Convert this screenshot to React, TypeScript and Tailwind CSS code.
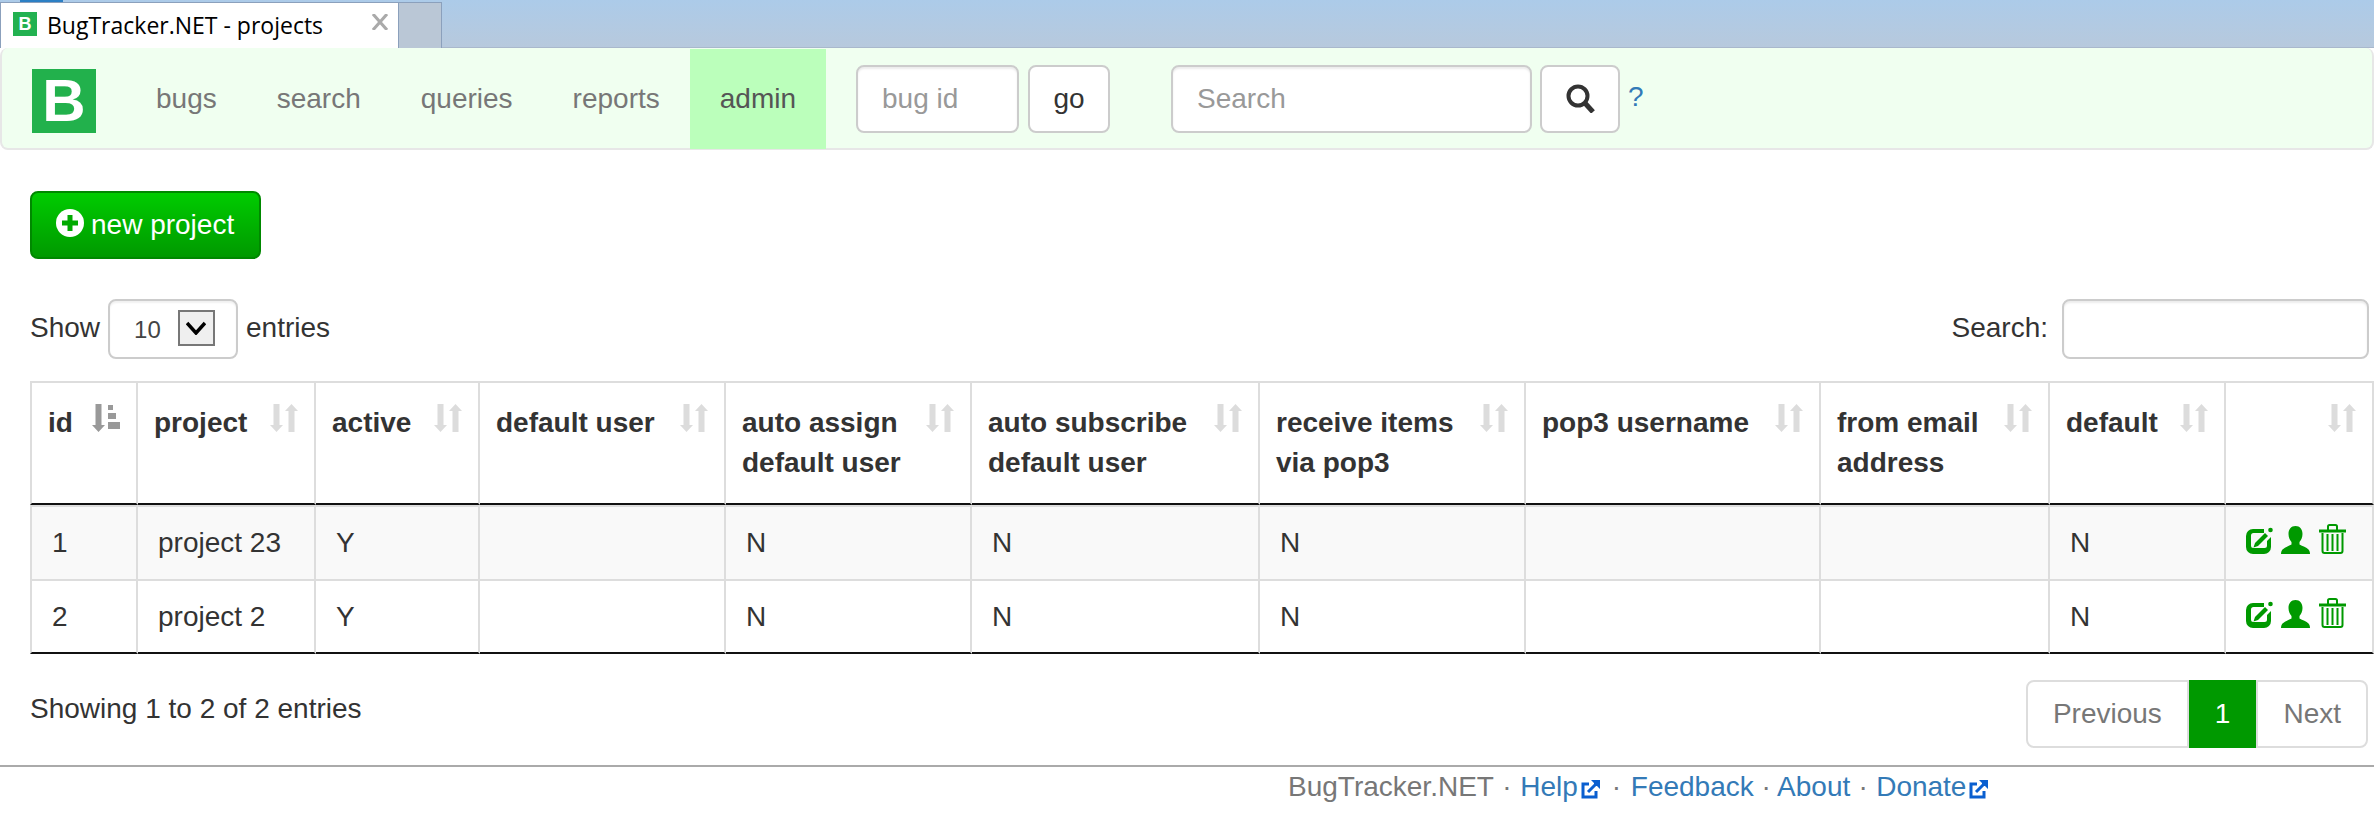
const columns = [
  { label: "id", width: "w-[108px]" },
  { label: "project", width: "w-[178px]" },
  { label: "active", width: "w-[164px]" },
  { label: "default user", width: "w-[246px]" },
  { label: "auto assign default user", width: "w-[246px]" },
  { label: "auto subscribe default user", width: "w-[288px]" },
  { label: "receive items via pop3", width: "w-[266px]" },
  { label: "pop3 username", width: "w-[295px]" },
  { label: "from email address", width: "w-[229px]" },
  { label: "default", width: "w-[176px]" },
  { label: "", width: "w-[148px]" },
];

const rows = [
  ["1", "project 23", "Y", "", "N", "N", "N", "", "", "N"],
  ["2", "project 2", "Y", "", "N", "N", "N", "", "", "N"],
];

function SortIcon({ active }: { active?: boolean }) {
  const color = active ? "#999999" : "#dcdcdc";
  return (
    <svg
      viewBox="0 0 28 28"
      className="absolute top-[21px] right-[16px] w-[28px] h-[28px]"
      fill={color}
    >
      <path d="M3.500 0h6v21H13l-6.500 7L0 21h3.500z" />
      {active ? (
        <path d="M16 1h5v5h-5zM16 9h8v6h-8zM16 18h12v7H16z" />
      ) : (
        <path d="M18.500 28h6V7H28L21.500 0 15 7h3.500z" />
      )}
    </svg>
  );
}

function EditIcon() {
  return (
    <svg viewBox="0 0 27 27" className="w-[27px] h-[27px]" fill="#009900">
      <path d="M7 2h11v4H7.500A2.500 2.500 0 0 0 5 8.500v10A2.500 2.500 0 0 0 7.500 21h11a2.500 2.500 0 0 0 2.500-2.500V14l4-4v10a7 7 0 0 1-7 7H7a7 7 0 0 1-7-7V9a7 7 0 0 1 7-7z" />
      <path d="M19 6l3 3-10 10-4.500 1.500L9 16z" />
      <circle cx="24.500" cy="3" r="2.300" />
    </svg>
  );
}

function PersonIcon() {
  return (
    <svg viewBox="0 0 29 28" className="w-[29px] h-[28px]" fill="#009900">
      <path d="M14.500 0c4.500 0 7 3.500 7 8 0 3.500-1.500 6.500-3 8v2.500c3 1.500 7 3 9 5 1 1 1.500 3 1.500 4.500H0c0-1.500.5-3.500 1.500-4.500 2-2 6-3.500 9-5V16c-1.500-1.500-3-4.500-3-8 0-4.500 2.500-8 7-8z" />
    </svg>
  );
}

function TrashIcon() {
  return (
    <svg viewBox="0 0 27 30" className="ml-px w-[27px] h-[30px]" fill="none" stroke="#009900" strokeWidth="2">
      <path d="M9 6V2.500A1.500 1.500 0 0 1 10.500 1h6A1.500 1.500 0 0 1 18 2.500V6" />
      <path d="M0 7h27" strokeWidth="3" />
      <path d="M3.500 9v18a2 2 0 0 0 2 2h16a2 2 0 0 0 2-2V9" />
      <path d="M8.500 10v17M13.500 10v17M18.500 10v17" />
    </svg>
  );
}

function ExternalIcon() {
  return (
    <svg viewBox="0 0 21 21" className="inline-block w-[21px] h-[21px] align-[-3px] ml-[3px]" fill="none">
      <path d="M8 6H2v13h13v-6" stroke="#0a5fd0" strokeWidth="3" />
      <path d="M7 14l7-7" stroke="#0a5fd0" strokeWidth="3" />
      <path d="M10 2h9v9l-3-3-3 0 0-3z" fill="#0a5fd0" />
    </svg>
  );
}

export default function App() {
  const navItems = ["bugs", "search", "queries", "reports"];

  return (
    <div className="min-h-screen bg-white text-[28px] leading-[40px] text-[#333] font-['Liberation_Sans',Arial,sans-serif]">
      {/* browser tab strip */}
      <div className="relative flex h-[48px] border-b border-[#a9b8cc] bg-gradient-to-b from-[#accbe9] to-[#b7c9dd]">
        <div className="absolute top-0 left-[20px] w-[43px] h-[2px] bg-[#2c7fc4]" />
        <div className="flex shrink-0 items-center w-[399px] h-[46px] mt-[2px] pl-[12px] bg-white border-x border-t border-[#8ba0bc]">
          <div className="flex shrink-0 items-center justify-center w-[24px] h-[24px] -mt-[4px] bg-[#22b150] text-white font-bold text-[18px] leading-none">
            B
          </div>
          <span className="ml-[10px] -mt-[2px] font-['Open_Sans',sans-serif] text-[23px] leading-[28px] text-black whitespace-nowrap">
            BugTracker.NET - projects
          </span>
          <svg viewBox="0 0 16 16" className="ml-auto mr-[10px] -mt-[7px] w-[16px] h-[16px]" stroke="#aaaaaa" strokeWidth="3">
            <path d="M1 0l14 16M15 0L1 16" />
          </svg>
        </div>
        <div className="shrink-0 w-[43px] h-[46px] mt-[2px] bg-[#bac7d6] border-r border-t border-[#8ba0bc]" />
      </div>

      {/* navbar */}
      <nav className="flex h-[102px] bg-[#f0fff0] border-2 border-[#e7e7e7] border-t-0 rounded-[8px] pt-px">
        <div className="flex items-center justify-center w-[64px] h-[64px] ml-[30px] mt-[20px] bg-[#22b14c] text-white font-bold text-[60px] leading-none">
          B
        </div>
        <ul className="flex ml-[30px] h-[100px]">
          {navItems.map((item) => (
            <li key={item} className="px-[30px] leading-[100px] text-[#777]">
              {item}
            </li>
          ))}
          <li className="px-[30px] leading-[100px] text-[#555] bg-[#bbffbb]">admin</li>
        </ul>
        <div className="flex items-start mt-[16px] ml-[30px]">
          <input
            placeholder="bug id"
            className="w-[163px] h-[68px] px-[24px] bg-white border-2 border-[#ccc] rounded-[8px] shadow-[inset_0_2px_2px_rgba(0,0,0,0.08)] placeholder:text-[#999] outline-none"
          />
          <button className="w-[82px] h-[68px] ml-[9px] bg-white border-2 border-[#ccc] rounded-[8px] text-[#333]">
            go
          </button>
          <input
            placeholder="Search"
            className="w-[361px] h-[68px] ml-[61px] px-[24px] bg-white border-2 border-[#ccc] rounded-[8px] shadow-[inset_0_2px_2px_rgba(0,0,0,0.08)] placeholder:text-[#999] outline-none"
          />
          <button className="flex items-center justify-center w-[80px] h-[68px] ml-[8px] bg-white border-2 border-[#ccc] rounded-[8px]">
            <svg viewBox="0 0 29 29" className="w-[29px] h-[29px] -mt-[2px]" fill="none" stroke="#333" strokeWidth="4">
              <circle cx="12" cy="12" r="9.500" />
              <path d="M18 18l9 10" strokeWidth="5" />
            </svg>
          </button>
          <span className="ml-[8px] text-[#337ab7] leading-[64px]">?</span>
        </div>
      </nav>

      <main className="pt-[41px] pl-[30px]">
        <button className="flex items-center w-[231px] h-[68px] pl-[24px] rounded-[8px] border-2 border-[#008800] bg-gradient-to-b from-[#00cc00] to-[#009900] text-white">
          <svg viewBox="0 0 28 28" className="w-[28px] h-[28px] -mt-[4px]">
            <circle cx="14" cy="14" r="14" fill="#ffffff" />
            <path d="M11.500 6h5v5.500H22v5h-5.500V22h-5v-5.500H6v-5h5.500z" fill="#00aa00" />
          </svg>
          <span className="ml-[7px]">new project</span>
        </button>

        <div className="flex justify-between items-center mt-[40px] w-[2339px]">
          <div className="flex items-center h-[60px]">
            <span className="-mt-[2px]">Show</span>
            <div className="flex items-center w-[130px] h-[60px] ml-[8px] pl-[24px] border-2 border-[#ccc] rounded-[8px] text-[24px] text-[#444] shadow-[inset_0_2px_2px_rgba(0,0,0,0.06)]">
              <span className="mt-[2px]">10</span>
              <div className="flex items-center justify-center w-[37px] h-[36px] ml-[17px] mt-[-2px] bg-[#efefef] border-2 border-[#777]">
                <svg viewBox="0 0 20 14" className="w-[20px] h-[14px]" fill="none" stroke="#000" strokeWidth="3.500">
                  <path d="M1 2l9 10 9-10" />
                </svg>
              </div>
            </div>
            <span className="ml-[8px] -mt-[2px]">entries</span>
          </div>
          <div className="flex items-center h-[60px]">
            <span className="-mt-[2px]">Search:</span>
            <input className="w-[307px] h-[60px] ml-[14px] bg-white border-2 border-[#ccc] rounded-[8px] shadow-[inset_0_2px_2px_rgba(0,0,0,0.08)] outline-none" />
          </div>
        </div>

        <table className="table-fixed w-[2344px] mt-[22px] border-separate border-spacing-0">
          <colgroup>
            {columns.map((col, i) => (
              <col key={i} className={col.width} />
            ))}
          </colgroup>
          <thead>
            <tr>
              {columns.map((col, i) => (
                <th
                  key={i}
                  className={
                    i === 0
                      ? "relative h-[124px] align-top text-left font-bold pt-[20px] pl-[16px] pr-[60px] border-2 border-b-[2px] border-[#ddd] border-b-[#111]"
                      : "relative h-[124px] align-top text-left font-bold pt-[20px] pl-[16px] pr-[60px] border-t-2 border-r-2 border-b-2 border-[#ddd] border-b-[#111]"
                  }
                >
                  {col.label}
                  <SortIcon active={i === 0} />
                </th>
              ))}
            </tr>
          </thead>
          <tbody>
            {rows.map((row, r) => (
              <tr key={r} className={r === 0 ? "bg-[#f9f9f9]" : "bg-white"}>
                {row.map((cell, i) => (
                  <td
                    key={i}
                    className={
                      (i === 0 ? "border-l-2 " : "") +
                      (r === 1 ? "h-[75px] border-b-2 border-b-[#111] " : "h-[74px] ") +
                      "pl-[20px] border-t-2 border-r-2 border-t-[#ddd] border-r-[#ddd] border-l-[#ddd]"
                    }
                  >
                    {cell}
                  </td>
                ))}
                <td
                  className={
                    (r === 1 ? "h-[75px] border-b-2 border-b-[#111] " : "h-[74px] ") +
                    "border-t-2 border-r-2 border-t-[#ddd] border-r-[#ddd]"
                  }
                >
                  <div className="flex items-end -mt-[8px] pl-[20px] gap-[8px]">
                    <EditIcon />
                    <PersonIcon />
                    <TrashIcon />
                  </div>
                </td>
              </tr>
            ))}
          </tbody>
        </table>

        <div className="flex justify-between items-start mt-[26px] w-[2338px]">
          <span className="mt-[9px]">Showing 1 to 2 of 2 entries</span>
          <div className="flex h-[68px] text-[#777]">
            <div className="flex items-center px-[25px] border-2 border-[#ddd] rounded-l-[8px]">Previous</div>
            <div className="flex items-center px-[26px] bg-[#009900] text-white">1</div>
            <div className="flex items-center px-[25px] border-2 border-[#ddd] rounded-r-[8px]">Next</div>
          </div>
        </div>
      </main>

      <footer className="mt-[17px] pl-[1288px] border-t-2 border-[#aaa] text-[#777] whitespace-nowrap">
        BugTracker.NET <span className="mx-[1px]">·</span> <span className="text-[#337ab7]">Help</span>
        <ExternalIcon /> <span className="mx-[2px]">·</span> <span className="text-[#337ab7]">Feedback</span> <span>·</span>{" "}
        <span className="text-[#337ab7]">About</span> <span className="mx-[0.500px]">·</span>{" "}
        <span className="text-[#337ab7]">Donate</span>
        <ExternalIcon />
      </footer>
    </div>
  );
}
